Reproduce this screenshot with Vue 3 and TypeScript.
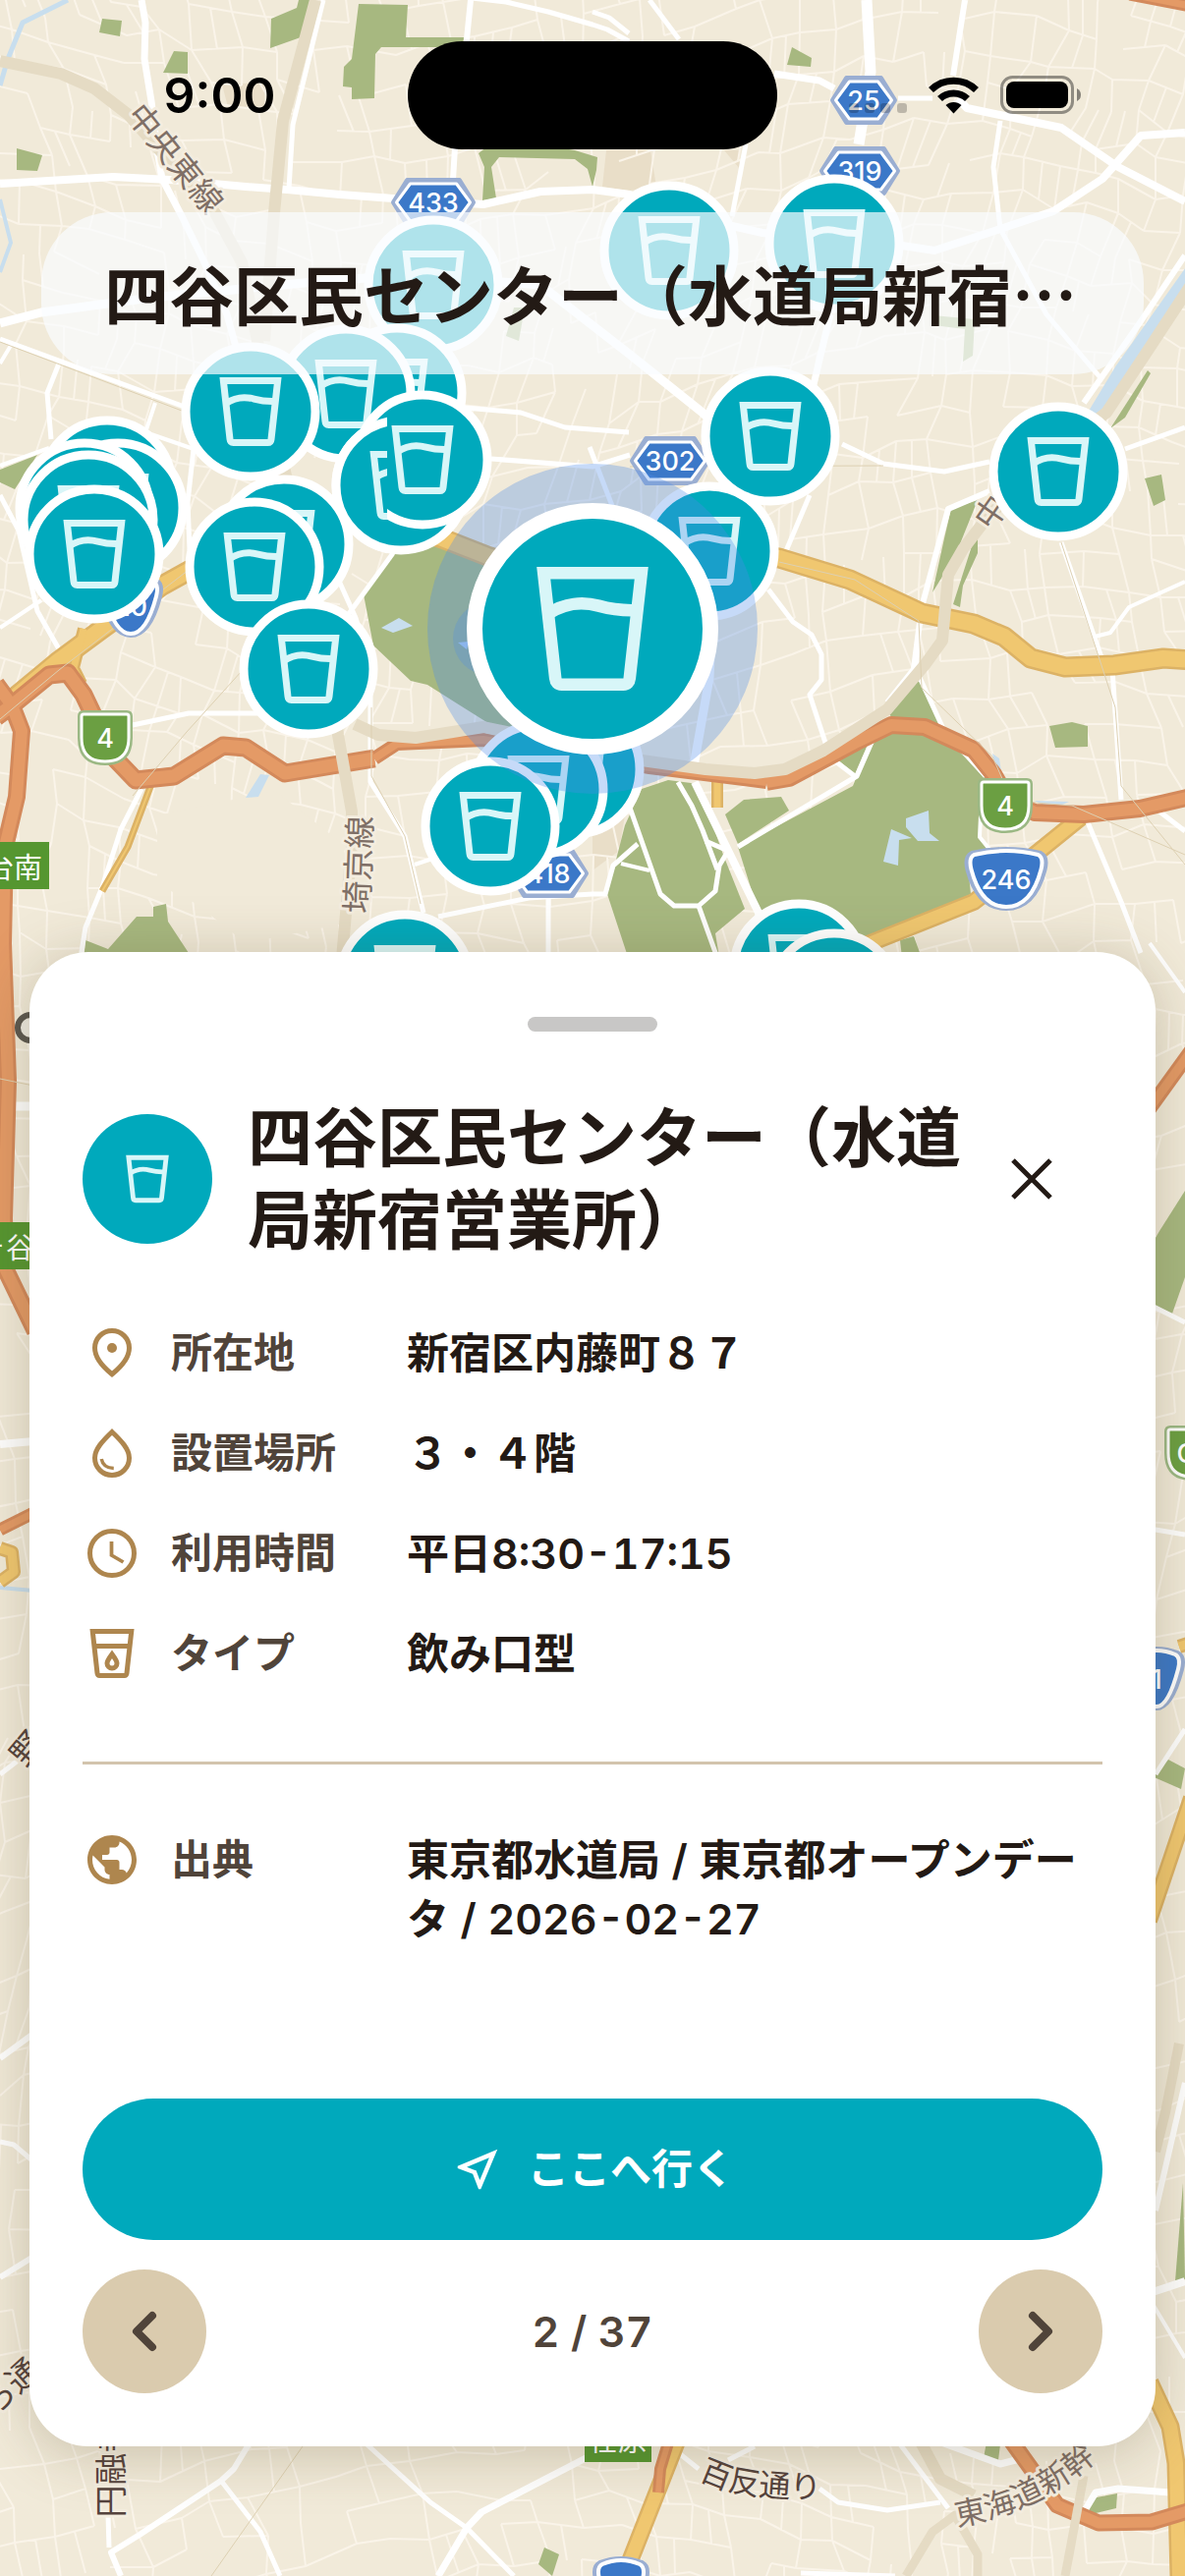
<script setup lang="ts">
import { ref } from 'vue'

interface Pin { x: number; y: number }
interface Road { w: number; pts: string }
interface Shield { x: number; y: number; w: number; label: string }

const placeName = '四谷区民センター（水道局新宿営業所）'
const total = 37
const current = ref(2)

const step = (delta: number) => {
  current.value = Math.min(total, Math.max(1, current.value + delta))
}

const details = [
  { icon: 'place', label: '所在地', value: '新宿区内藤町８７' },
  { icon: 'drop', label: '設置場所', value: '３・４階' },
  { icon: 'clock', label: '利用時間', value: '平日8:30-17:15' },
  { icon: 'type', label: 'タイプ', value: '飲み口型' },
]

const pins: Pin[] = [
  { x: 681, y: 255 }, { x: 849, y: 248 }, { x: 441, y: 290 },
  { x: 404, y: 400 }, { x: 352, y: 401 }, { x: 255, y: 419 },
  { x: 722, y: 561 }, { x: 784, y: 444 }, { x: 1077, y: 480 },
  { x: 109, y: 494 }, { x: 120, y: 517 }, { x: 86, y: 517 },
  { x: 90, y: 529 }, { x: 96, y: 564 }, { x: 289, y: 554 },
  { x: 259, y: 577 }, { x: 314, y: 681 }, { x: 585, y: 783 },
  { x: 548, y: 804 }, { x: 499, y: 841 }, { x: 412, y: 997 },
  { x: 813, y: 986 }, { x: 849, y: 1016 }, { x: 408, y: 494 },
  { x: 430, y: 468 },
]

/* Side streets: a warped lattice with a share of its edges left out. */
const buildStreets = (): string => {
  let seed = 20260227
  const rnd = () => {
    seed = (seed * 1664525 + 1013904223) % 4294967296
    return seed / 4294967296
  }
  const s = 36
  const cols = 46
  const rows = 84
  const nodes: Array<Array<[number, number]>> = []
  for (let r = 0; r < rows; r++) {
    const line: Array<[number, number]> = []
    for (let c = 0; c < cols; c++) {
      const bx = (c - 6) * s
      const by = (r - 6) * s
      const x = bx + 60 * Math.sin(by / 210 + bx / 500) + (rnd() - 0.5) * 16
      const y = by + 55 * Math.sin(bx / 190 - by / 620) + (rnd() - 0.5) * 16
      line.push([Math.round(x), Math.round(y)])
    }
    nodes.push(line)
  }
  let d = ''
  for (let r = 0; r < rows - 1; r++) {
    for (let c = 0; c < cols - 1; c++) {
      const [x, y] = nodes[r][c]
      const right = nodes[r][c + 1]
      const down = nodes[r + 1][c]
      if (rnd() > 0.26) d += `M${x} ${y}L${right[0]} ${right[1]}`
      if (rnd() > 0.26) d += `M${x} ${y}L${down[0]} ${down[1]}`
      if (rnd() > 0.8) {
        const mx = Math.round((x + right[0]) / 2)
        const my = Math.round((y + right[1]) / 2)
        const next = nodes[r + 1][c + 1]
        d += `M${mx} ${my}L${Math.round((down[0] + next[0]) / 2)} ${Math.round((down[1] + next[1]) / 2)}`
      }
    }
  }
  return d
}
const streets = buildStreets()

const parks = [
  '104,19 124,21 122,37 101,33',
  '177,52 191,53 191,75 166,74',
  '304,0 317,0 306,38 275,49 276,19 302,8',
  '365,4 415,5 413,38 472,38 471,48 388,48 382,55 381,100 358,101 358,89 349,88 350,68 358,60',
  '17,151 43,158 38,174 17,173',
  '487,156 508,140 585,153 608,160 607,173 603,190 598,172 585,162 508,160 500,170 505,202 491,204 493,170',
  '523,313 534,313 528,347 515,342',
  '950,321 992,325 990,362 980,368 982,335 950,331',
  '0,478 38,463 15,498 0,491',
  '400,563 455,545 480,560 603,600 620,760 552,746 500,738 465,716 435,697 418,693 380,657 370,605',
  '87,957 110,966 139,933 156,933 156,923 169,920 171,938 192,970 85,980',
  '891,742 920,738 960,750 1003,790 1000,815 997,851 1007,866 985,881 988,910 888,955 850,975 780,975 772,929 751,862 868,800',
  '653,803 680,794 711,798 736,870 758,925 728,950 733,980 641,980 618,910 636,840',
  '738,829 757,814 795,811 803,825 751,859',
  '851,772 872,755 889,744 870,788',
  '938,692 947,714 961,744 907,730 903,722 930,696',
  '968,518 995,509 972,566 949,603 961,548',
  '995,537 995,563 980,596 977,618 970,615',
  '1165,487 1182,483 1186,509 1174,515',
  '1068,739 1091,735 1107,739 1107,760 1074,761',
  '916,957 930,953 938,975 918,975',
  '806,48 826,59 825,68 801,66',
  '1168,377 1171,380 1145,425 1130,436',
  '1206,1212 1180,1253 1170,1270 1170,1330 1193,1337 1206,1300',
  '1189,1791 1206,1800 1202,1821 1170,1807',
  '1204,2222 1206,2320 1196,2322',
  '1111,2543 1137,2538 1136,2553 1107,2560',
  '1005,2480 1019,2480 1016,2504 1001,2502',
  '554,2593 569,2600 562,2622 548,2610',
]
const ponds = [
  '388,639 406,629 420,637 400,644',
  '466,654 477,653 475,661',
  '250,812 265,788 274,789 263,811',
  '899,877 907,844 928,853 915,855 914,881',
  '922,833 945,825 946,848 956,856 934,856 922,842',
  '1010,767 1017,772 1020,792 1014,788',
  '1053,815 1088,816 1070,824',
]
const lots = [
  '617,153 662,153 668,190 640,194 613,190',
  '737,153 752,153 753,172',
  '603,830 636,830 630,866 603,886',
  '226,86 269,84 269,108 232,109',
]
const streams: Road[] = [
  { w: 5, pts: '69,0 23,23 8,60 0,87' },
  { w: 4, pts: '0,203 11,247 0,277' },
  { w: 14, pts: '1212,277 1141,377 1106,435' },
  { w: 4, pts: '0,1616 34,1619' },
]
const rails: Road[] = [
  { w: 12, pts: '0,62 62,75 96,90 131,117 219,217 246,267 262,347 290,480 330,640 344,748 358,826 358,860 348,976' },
  { w: 12, pts: '321,0 288,123 279,217 269,347' },
  { w: 12, pts: '361,737 385,748 423,751 492,740 653,774 718,783 768,787 799,783 838,764 903,722 941,677 959,652 965,585 980,559 1003,529 1060,470 1126,420 1166,360 1212,290' },
  { w: 12, pts: '934,2480 957,2523 991,2540' },
  { w: 9, pts: '922,2622 949,2577 972,2560 995,2600 995,2622' },
  { w: 9, pts: '1103,2520 1084,2622' },
  { w: 10, pts: '1200,2080 1186,2150 1176,2190' },
]
const roads: Road[] = [
  { w: 7, pts: '144,0 148,23 147,60 154,103 160,153 165,182 185,220 208,267 231,320 240,353' },
  { w: 8, pts: '0,187 115,180 173,183 250,190 292,193 346,198 400,202 492,208 550,195 603,193 641,198 745,230 776,237 918,250 951,255 1018,233 1072,215 1122,182 1161,138 1206,135' },
  { w: 5, pts: '329,0 298,127 294,192' },
  { w: 6, pts: '479,0 475,40 463,150 461,183' },
  { w: 5, pts: '480,-2 515,2 558,12 603,25 618,30 640,42' },
  { w: 9, pts: '0,329 42,318 154,303 340,285 420,280 550,290 640,360 715,420 780,480' },
  { w: 5, pts: '0,345 185,413 260,440' },
  { w: 5, pts: '60,370 48,400 52,447' },
  { w: 4, pts: '0,370 12,350' },
  { w: 4, pts: '158,410 148,440 200,458' },
  { w: 5, pts: '473,415 530,420 575,435 640,440' },
  { w: 5, pts: '500,467 603,475 641,463' },
  { w: 5, pts: '600,455 625,520' },
  { w: 5, pts: '198,448 191,511 193,560' },
  { w: 4, pts: '0,474 50,456' },
  { w: 5, pts: '0,504 19,540 38,622 63,666' },
  { w: 4, pts: '0,639 42,611' },
  { w: 5, pts: '135,738 192,726 262,726' },
  { w: 5, pts: '400,563 354,626' },
  { w: 5, pts: '344,589 362,629 377,681 377,733 377,796 412,851 431,929' },
  { w: 5, pts: '144,803 123,844 104,903 87,944 82,975' },
  { w: 5, pts: '446,933 538,914 603,910 616,910 624,881 649,859' },
  { w: 5, pts: '558,914 558,975' },
  { w: 4, pts: '422,880 446,872' },
  { w: 5, pts: '857,452 899,472 961,480 1007,470' },
  { w: 5, pts: '1145,457 1206,435' },
  { w: 5, pts: '824,504 799,563' },
  { w: 5, pts: '782,600 807,633 826,646 836,666 836,692 824,707 841,759 849,774 870,790' },
  { w: 6, pts: '1007,500 965,518 938,618 930,681 903,715' },
  { w: 5, pts: '889,751 872,790 751,862' },
  { w: 5, pts: '934,655 932,681 961,744 1003,790' },
  { w: 5, pts: '1080,552 1122,672' },
  { w: 5, pts: '1132,681 1141,814' },
  { w: 4, pts: '1206,592 1149,618 1130,644 1114,648' },
  { w: 8, pts: '707,796 772,929 788,975' },
  { w: 5, pts: '690,796 704,820 715,845 730,885' },
  { w: 5, pts: '641,822 672,910 686,922 711,922 728,907 732,881 741,866 718,856' },
  { w: 5, pts: '711,922 730,975' },
  { w: 4, pts: '632,879 661,886' },
  { w: 9, pts: '727,580 722,690 706,780' },
  { w: 5, pts: '1107,837 1141,918 1161,970' },
  { w: 5, pts: '1180,826 1206,846' },
  { w: 4, pts: '998,830 997,852 1010,868' },
  { w: 11, pts: '882,0 886,73 874,147' },
  { w: 6, pts: '982,0 970,77' },
  { w: 8, pts: '975,100 984,110 1080,130 1138,170 1206,205' },
  { w: 5, pts: '914,100 949,100' },
  { w: 7, pts: '788,75 834,82 849,90' },
  { w: 5, pts: '1018,123 1011,170 1018,233 1065,320 1122,387' },
  { w: 5, pts: '661,0 691,40' },
  { w: 6, pts: '1206,260 1161,327 1103,410' },
  { w: 5, pts: '759,147 745,220' },
  { w: 7, pts: '845,320 826,400' },
  { w: 5, pts: '603,12 620,18 640,34' },
  { w: 9, pts: '0,1126 34,1126' },
  { w: 8, pts: '0,1470 34,1467' },
  { w: 5, pts: '0,1806 34,1780' },
  { w: 6, pts: '0,2095 34,2070' },
  { w: 4, pts: '1170,960 1206,1010' },
  { w: 5, pts: '1170,1328 1206,1346' },
  { w: 5, pts: '1170,1556 1206,1562' },
  { w: 5, pts: '1206,1760 1176,1806' },
  { w: 6, pts: '1206,2120 1176,2250' },
  { w: 8, pts: '1170,2334 1206,2322' },
  { w: 4, pts: '1170,2340 1206,2400' },
  { w: 6, pts: '258,2480 238,2513 225,2525 142,2580 113,2598 123,2622' },
  { w: 5, pts: '110,2560 111,2593' },
  { w: 5, pts: '225,2525 265,2577 285,2622' },
  { w: 5, pts: '370,2485 438,2547 475,2573 523,2622' },
  { w: 7, pts: '600,2500 490,2557 475,2573 446,2622' },
  { w: 6, pts: '0,2318 34,2297' },
  { w: 5, pts: '0,2180 14,2183 34,2200' },
  { w: 5, pts: '691,2497 711,2513' },
  { w: 5, pts: '768,2490 741,2504' },
  { w: 5, pts: '834,2533 853,2547 903,2555 957,2547' },
  { w: 5, pts: '910,2480 965,2553' },
  { w: 7, pts: '955,2485 1018,2508 1049,2500' },
  { w: 7, pts: '1103,2557 1115,2537 1138,2533 1191,2537' },
  { w: 5, pts: '815,2619 911,2622' },
]
const yellowRoads: Road[] = [
  { w: 17, pts: '-6,727 58,674 104,640 165,596 192,581 260,545 330,520 400,530 450,548 496,566 603,600 700,560 793,568 865,590 938,624 991,635 1022,648 1049,670 1084,679 1134,677 1184,670 1212,672' },
  { w: 8, pts: '85,640 75,680 83,696' },
  { w: 3, pts: '177,788 154,798 130,862 104,907' },
  { w: 14, pts: '1100,832 1053,870 991,918 888,959 850,975' },
  { w: 8, pts: '730,792 730,822' },
  { w: 14, pts: '691,2480 641,2607 636,2622' },
  { w: 15, pts: '1170,2425 1191,2470 1197,2507 1200,2622' },
  { w: 12, pts: '1212,1830 1170,1955' },
  { w: 10, pts: '0,1576 12,1580 14,1600 0,1610' },
  { w: 10, pts: '1200,1676 1212,1672' },
]
const expressways: Road[] = [
  { w: 16, pts: '-4,730 12,718 50,687 69,685 85,707 115,770 138,794 177,790 227,759 250,761 290,787 381,772' },
  { w: 11, pts: '381,772 404,757 492,753 560,765 661,781 780,796' },
  { w: 15, pts: '780,796 803,792 872,755 907,738 941,740 991,763 1011,788 1026,814 1053,827 1103,829 1160,823 1212,811' },
  { w: 15, pts: '-4,696 12,718 22,744 17,811 5,862 3,960 8,1100 4,1240 6,1293 36,1355' },
  { w: 12, pts: '1212,1070 1170,1128' },
  { w: 10, pts: '0,1557 34,1540' },
  { w: 14, pts: '1026,2480 1076,2550 1118,2568 1172,2567 1212,2555' },
  { w: 9, pts: '682,2480 672,2513 670,2537' },
  { w: 10, pts: '1150,-6 1212,6' },
]
const hexShields: Shield[] = [
  { x: 441, y: 206, w: 86, label: '433' },
  { x: 879, y: 102, w: 68, label: '25' },
  { x: 875, y: 174, w: 82, label: '319' },
  { x: 682, y: 469, w: 82, label: '302' },
  { x: 558, y: 889, w: 82, label: '418' },
]
const hexPoints = (w: number, h: number) =>
  `${-w / 2},0 ${-w / 2 + 14},${-h / 2} ${w / 2 - 14},${-h / 2} ${w / 2},0 ${w / 2 - 14},${h / 2} ${-w / 2 + 14},${h / 2}`

const expresswayShields: Shield[] = [
  { x: 107, y: 751, w: 57, label: '4' },
  { x: 1023, y: 820, w: 57, label: '4' },
  { x: 1213, y: 1479, w: 57, label: 'C1' },
]
const nationalShields: Shield[] = [
  { x: 133, y: 617, w: 66, label: '20' },
  { x: 1024, y: 895, w: 85, label: '246' },
  { x: 1177, y: 1709, w: 58, label: '1' },
  { x: 632, y: 2635, w: 58, label: '1' },
]
const nationalPath = (w: number) => {
  const h = w / 2
  return `M${-h + 5} -25Q0 -33 ${h - 5} -25Q${h + 1} -22 ${h - 2} -10Q${h - 12} 28 0 28Q${-h + 12} 28 ${-h + 2} -10Q${-h - 1} -22 ${-h + 5} -25Z`
}
</script>

<template>
  <div class="screen" lang="ja">
    <svg class="map" viewBox="0 0 1206 2622" preserveAspectRatio="xMidYMin slice" aria-label="地図">
      <defs>
        <g id="cup" fill="none" stroke-width="2">
          <path d="M4.1 3H19.9L18 20Q17.900 21 17 21H7Q6.100 21 6 20Z" />
          <path d="M4.800 9.600C7.500 7.800 10.500 7.600 13 8.300S17 9.100 19.300 9" />
        </g>
        <g id="pin">
          <circle r="66" fill="#00a9bc" stroke="#fff" stroke-width="9" />
          <use href="#cup" stroke="#d8f6f8" transform="scale(3.500) translate(-12 -12)" />
        </g>
        <clipPath id="tile"><rect x="300" y="380" width="94" height="220" /></clipPath>
        <path id="street-curve" d="M711 2522Q748 2546 853 2542" />
        <path id="line-curve" d="M974 2571Q1070 2556 1140 2480" />
      </defs>

      <rect width="1206" height="2622" fill="#f1ead9" />
      <polygon v-for="p in lots" :key="p" :points="p" fill="#e9dec8" />
      <path :d="streets" class="streets" />
      <polygon points="160,830 280,805 350,860 350,940 250,960 200,920 160,900" fill="#f1ead9" />
      <polygon v-for="p in parks" :key="p" :points="p" fill="#a7b880" />
      <polygon v-for="p in ponds" :key="p" :points="p" fill="#c8deee" />
      <g class="lines">
        <polyline v-for="r in streams" :key="r.pts" :points="r.pts" :stroke-width="r.w" stroke="#c8deee" />
        <polyline v-for="r in roads" :key="r.pts" :points="r.pts" :stroke-width="r.w" stroke="#fff" />
        <polyline v-for="r in yellowRoads" :key="'c' + r.pts" :points="r.pts" :stroke-width="r.w + 4" stroke="#dcb265" />
        <polyline v-for="r in yellowRoads" :key="r.pts" :points="r.pts" :stroke-width="r.w - 1" stroke="#f0c770" />
        <polyline v-for="r in expressways" :key="'c' + r.pts" :points="r.pts" :stroke-width="r.w + 3" stroke="#d3895b" />
        <polyline v-for="r in expressways" :key="r.pts" :points="r.pts" :stroke-width="r.w - 3" stroke="#e49a66" />
        <polyline v-for="r in rails" :key="r.pts" :points="r.pts" :stroke-width="r.w" stroke="#e5dbc4" />
      </g>
      <g class="hairlines">
        <path d="M0 732L60 682L104 648L192 580M0 1098L34 1105M378 720V790L412 851L428 920M135 810L190 745L330 590M215 2622L308 2490M641 475L899 474" />
        <path d="M793 572L870 590L935 632L938 700L1010 770L1030 815L1091 820L1206 870M1080 552L1135 720L1141 800L1206 880M0 348L185 418" />
      </g>

      <g class="map-text rail-text">
        <text transform="translate(180 160) rotate(51)">中央東線</text>
        <text transform="translate(363 880) rotate(-88)">埼京線</text>
        <text transform="translate(1007 520) rotate(-55)">中</text>
      </g>
      <g class="map-text street-text">
        <text transform="translate(111 2513) rotate(-90)">円融寺</text>
        <text transform="translate(22 2416) rotate(-42)">ら通り</text>
        <text transform="translate(26 1778) rotate(-50)">野</text>
      </g>
      <text class="curved street-text"><textPath href="#street-curve">百反通り</textPath></text>
      <text class="curved rail-text"><textPath href="#line-curve">東海道新幹</textPath></text>

      <g fill="#559630">
        <rect x="-20" y="857" width="70" height="48" />
        <rect x="-20" y="1244" width="70" height="48" />
        <rect x="595" y="2458" width="68" height="48" />
      </g>
      <g class="sign-text">
        <text x="14" y="881">台南</text>
        <text x="6" y="1268">ヶ谷</text>
        <text x="629" y="2482">荏原</text>
      </g>
      <g fill="#efebe2" stroke="#5b5750" stroke-width="6">
        <circle cx="31" cy="1046" r="13" />
      </g>

      <g v-for="s in expresswayShields" :key="'e' + s.x" :transform="`translate(${s.x} ${s.y})`">
        <path d="M-22 -28H22Q28 -28 28 -22V0Q28 28 0 28Q-28 28 -28 0V-22Q-28 -28 -22 -28Z" fill="#9bb884" />
        <path d="M-22 -24H22Q24 -24 24 -22V0Q24 24 0 24Q-24 24 -24 0V-22Q-24 -24 -22 -24Z" fill="#6b9f42" stroke="#fff" stroke-width="3" />
        <text class="shield-text">{{ s.label }}</text>
      </g>
      <g v-for="s in nationalShields" :key="'n' + s.x" :transform="`translate(${s.x} ${s.y})`">
        <path :d="nationalPath(s.w - 6)" fill="#3b78c8" stroke="#9aaed2" stroke-width="8" />
        <path :d="nationalPath(s.w - 10)" fill="#3b78c8" stroke="#fff" stroke-width="4" />
        <text class="shield-text">{{ s.label }}</text>
      </g>
      <g v-for="s in hexShields" :key="'h' + s.label" :transform="`translate(${s.x} ${s.y})`">
        <polygon :points="hexPoints(s.w - 5, 45)" fill="#9aaed2" stroke="#9aaed2" stroke-width="5" stroke-linejoin="round" />
        <polygon :points="hexPoints(s.w - 11, 38)" fill="#3b78c8" stroke="#fff" stroke-width="3" stroke-linejoin="round" />
        <text class="shield-text">{{ s.label }}</text>
      </g>

      <use v-for="(p, i) in pins" :key="i" href="#pin" :x="p.x" :y="p.y" />
      <g clip-path="url(#tile)">
        <use href="#pin" x="408" y="494" />
      </g>
      <circle cx="603" cy="640" r="168" fill="#4d8dea" fill-opacity="0.320" />
      <circle cx="499" cy="650" r="38" fill="#4d8dea" fill-opacity="0.250" />
      <g transform="translate(603 640)">
        <circle r="120" fill="#00a9bc" stroke="#fff" stroke-width="16" />
        <use href="#cup" stroke="#d8f6f8" transform="scale(6.300) translate(-12 -12)" />
      </g>
    </svg>

    <header class="top">
      <div class="status">
        <span class="time">9:00</span>
        <span class="island"></span>
        <span class="indicators">
          <svg width="59" height="38" viewBox="0 0 59 38" fill="#000" fill-opacity="0.220" aria-hidden="true">
            <rect x="0" y="27" width="10" height="10" rx="3" /><rect x="16" y="27" width="10" height="10" rx="3" />
            <rect x="32" y="27" width="10" height="10" rx="3" /><rect x="49" y="27" width="10" height="10" rx="3" />
          </svg>
          <svg width="51" height="38" viewBox="0 0 51 38" aria-hidden="true">
            <g fill="none" stroke="#000" stroke-width="7">
              <path d="M2.500 13.500C15 1 36 1 48.500 13.500" />
              <path d="M11.500 22.500C19 15 32 15 39.500 22.500" />
            </g>
            <path d="M17.500 29C22 25 29 25 33.500 29L25.500 37.500Z" />
          </svg>
          <svg width="83" height="40" viewBox="0 0 83 40" aria-hidden="true">
            <rect x="1.500" y="1.500" width="72" height="36" rx="11" fill="none" stroke="#000" stroke-opacity="0.400" stroke-width="3" />
            <rect x="6" y="6" width="63" height="27" rx="8" />
            <path d="M78 13Q82 15 82 19.500T78 26Z" fill-opacity="0.450" />
          </svg>
        </span>
      </div>
      <p class="banner">{{ placeName }}</p>
    </header>

    <section class="sheet">
      <div class="handle"></div>
      <div class="heading">
        <span class="badge">
          <svg width="58" height="58" viewBox="0 0 24 24" aria-hidden="true"><use href="#cup" stroke="#d8f6f8" /></svg>
        </span>
        <h1>{{ placeName }}</h1>
        <button class="close" type="button" aria-label="閉じる">
          <svg width="42" height="42" viewBox="0 0 42 42" fill="none" stroke="#231a15" stroke-width="5" aria-hidden="true">
            <path d="M2 2L40 40M40 2L2 40" />
          </svg>
        </button>
      </div>

      <dl class="rows">
        <div v-for="d in details" :key="d.label" class="row">
          <svg class="icon" viewBox="0 0 24 24" aria-hidden="true">
            <template v-if="d.icon === 'place'">
              <path d="M12 3A7 7 0 0 0 5 10C5 14 8.400 17.800 12 20.700C15.600 17.800 19 14 19 10A7 7 0 0 0 12 3Z" />
              <circle cx="12" cy="10" r="2" class="solid" />
            </template>
            <template v-else-if="d.icon === 'drop'">
              <path d="M12 3.400C8 7.200 5 10.500 5 14A7 7 0 0 0 19 14C19 10.500 16 7.200 12 3.400Z" />
              <path d="M7.700 14.400C8.100 16.600 9.900 18.100 12.700 18.200" stroke-width="1.400" />
            </template>
            <template v-else-if="d.icon === 'clock'">
              <circle cx="12" cy="12" r="9" />
              <path d="M11.800 7.200V12.800L16.600 15.600" stroke-width="1.500" />
            </template>
            <template v-else>
              <path d="M4.100 3H19.900L18 20Q17.900 21 17 21H7Q6.100 21 6 20Z" />
              <path d="M4.500 9H19.500" />
              <path d="M12 12.300C10.800 13.900 10 15 10 16A2 2 0 0 0 14 16C14 15 13.200 13.900 12 12.300Z" />
            </template>
          </svg>
          <dt>{{ d.label }}</dt>
          <dd>{{ d.value }}</dd>
        </div>
      </dl>

      <hr />

      <dl class="rows">
        <div class="row">
          <svg class="icon" viewBox="0 0 24 24" aria-hidden="true">
            <path class="solid" d="M12 2C6.480 2 2 6.480 2 12s4.480 10 10 10 10-4.480 10-10S17.520 2 12 2zm-1 17.930c-3.950-.490-7-3.850-7-7.930 0-.620.080-1.210.210-1.790L9 15v1c0 1.100.900 2 2 2v1.930zm6.900-2.540c-.260-.810-1-1.390-1.900-1.390h-1v-3c0-.550-.450-1-1-1H8v-2h2c.550 0 1-.450 1-1V7h2c1.100 0 2-.900 2-2v-.410c2.930 1.190 5 4.060 5 7.410 0 2.080-.800 3.970-2.100 5.390z" />
          </svg>
          <dt>出典</dt>
          <dd>東京都水道局 / 東京都オープンデータ / 2026-02-27</dd>
        </div>
      </dl>

      <button class="go" type="button">
        <svg width="54" height="54" viewBox="0 0 24 24" fill="#fff" aria-hidden="true">
          <path d="M17.270 6.730l-4.240 10.130-1.320-3.420-.320-.830-.820-.320-3.430-1.330 10.130-4.230M21 3L3 10.530v.980l6.840 2.650L12.480 21h.980L21 3z" />
        </svg>
        ここへ行く
      </button>

      <nav class="pager" aria-label="スポット">
        <button type="button" aria-label="前へ" @click="step(-1)">
          <svg width="48" height="48" viewBox="0 0 48 48" aria-hidden="true"><path d="M32 8L16 24L32 40" /></svg>
        </button>
        <span>{{ current }} / {{ total }}</span>
        <button type="button" aria-label="次へ" @click="step(1)">
          <svg width="48" height="48" viewBox="0 0 48 48" aria-hidden="true"><path d="M16 8L32 24L16 40" /></svg>
        </button>
      </nav>
    </section>
  </div>
</template>

<style>
body {
  margin: 0;
  background: #f1ead9;
}
</style>

<style scoped>
.screen {
  position: relative;
  display: flex;
  flex-direction: column;
  min-height: 100vh;
  overflow: hidden;
  box-sizing: border-box;
  padding-bottom: 132px;
  color: #231a15;
  font-family: "Inter", "Noto Sans CJK JP", sans-serif;
}
.map {
  position: absolute;
  inset: 0;
  width: 100%;
  height: 100%;
  font-family: "Noto Sans CJK JP", sans-serif;
}
.streets {
  fill: none;
  stroke: #faf4e9;
  stroke-width: 2;
}
.lines {
  fill: none;
  stroke-linejoin: round;
}
.hairlines {
  fill: none;
  stroke: #ddd0b2;
  stroke-width: 1;
}
.map-text text {
  font-size: 33px;
  text-anchor: middle;
  dominant-baseline: central;
}
.curved {
  font-size: 32px;
}
.rail-text,
.street-text {
  paint-order: stroke;
  stroke: #f4eddf;
  stroke-width: 6px;
  stroke-linejoin: round;
}
.rail-text {
  fill: #7f6f66;
}
.street-text {
  fill: #55433d;
}
.sign-text text {
  fill: #fff;
  font-size: 29px;
  text-anchor: middle;
  dominant-baseline: central;
}
.shield-text {
  fill: #fff;
  font-family: "Inter", sans-serif;
  font-size: 27px;
  font-weight: 500;
  text-anchor: middle;
  dominant-baseline: central;
}

.top,
.sheet {
  position: relative;
}
.top {
  padding: 42px 0 0;
}
.status {
  display: grid;
  grid-template-columns: 1fr 376px 1fr;
  align-items: center;
  height: 110px;
}
.time {
  padding-left: 32px;
  color: #000;
  font-size: 50px;
  font-weight: 600;
  line-height: 60px;
  text-align: center;
}
.island {
  height: 110px;
  border-radius: 55px;
  background: #000;
}
.indicators {
  display: flex;
  align-items: center;
  justify-content: flex-end;
  gap: 22px;
  padding-right: 105px;
}
.banner {
  height: 165px;
  margin: 64px 42px 0;
  padding: 0 64px;
  overflow: hidden;
  border-radius: 72px;
  background: rgba(250, 252, 255, 0.7);
  font-family: "Noto Sans CJK JP", sans-serif;
  font-size: 66px;
  font-weight: 700;
  line-height: 162px;
  text-overflow: ellipsis;
  white-space: nowrap;
}

.sheet {
  display: flex;
  flex-direction: column;
  margin: auto 30px 0;
  padding: 66px 54px 54px;
  border-radius: 60px;
  background: #fff;
  box-shadow: 0 6px 60px rgba(90, 75, 40, 0.28);
}
.handle {
  align-self: center;
  width: 132px;
  height: 15px;
  border-radius: 8px;
  background: #c8c7c6;
}
.heading {
  display: flex;
  align-items: center;
  margin-top: 66px;
}
.badge {
  display: flex;
  flex: none;
  align-items: center;
  justify-content: center;
  width: 132px;
  height: 132px;
  border-radius: 50%;
  background: #00a9bc;
}
h1 {
  flex: 1;
  margin: 0 0 0 36px;
  font-size: 66px;
  font-weight: 700;
  line-height: 84px;
}
button {
  display: flex;
  align-items: center;
  justify-content: center;
  padding: 0;
  border: 0;
  font-family: inherit;
  cursor: pointer;
}
.close {
  flex: none;
  width: 144px;
  height: 144px;
  background: none;
}
.rows {
  display: flex;
  flex-direction: column;
  gap: 42px;
  margin: 63px 0 0;
}
.row {
  display: grid;
  grid-template-columns: 60px 210px 1fr;
  column-gap: 30px;
}
.icon {
  width: 60px;
  height: 60px;
  fill: none;
  stroke: #ae864e;
  stroke-width: 2;
}
.solid {
  fill: #ae864e;
  stroke: none;
}
dt,
dd {
  margin: 0;
  font-weight: 600;
  line-height: 60px;
}
dt {
  color: #50443a;
  font-size: 42px;
}
dd {
  font-size: 43px;
  font-variant-numeric: tabular-nums;
}
hr {
  width: 100%;
  height: 3px;
  margin: 80px 0 4px;
  border: 0;
  background: #d3c4ad;
}
.go {
  gap: 24px;
  height: 144px;
  margin-top: 153px;
  border-radius: 72px;
  background: #00a9bc;
  color: #fff;
  font-size: 42px;
  font-weight: 600;
  line-height: 60px;
}
.pager {
  display: flex;
  align-items: center;
  justify-content: space-between;
  margin-top: 30px;
  color: #50443a;
  font-size: 43px;
  font-weight: 600;
  font-variant-numeric: tabular-nums;
}
.pager button {
  width: 126px;
  height: 126px;
  border-radius: 50%;
  background: #dacbae;
}
.pager path {
  fill: none;
  stroke: #50443a;
  stroke-width: 8;
  stroke-linecap: round;
  stroke-linejoin: round;
}
</style>
